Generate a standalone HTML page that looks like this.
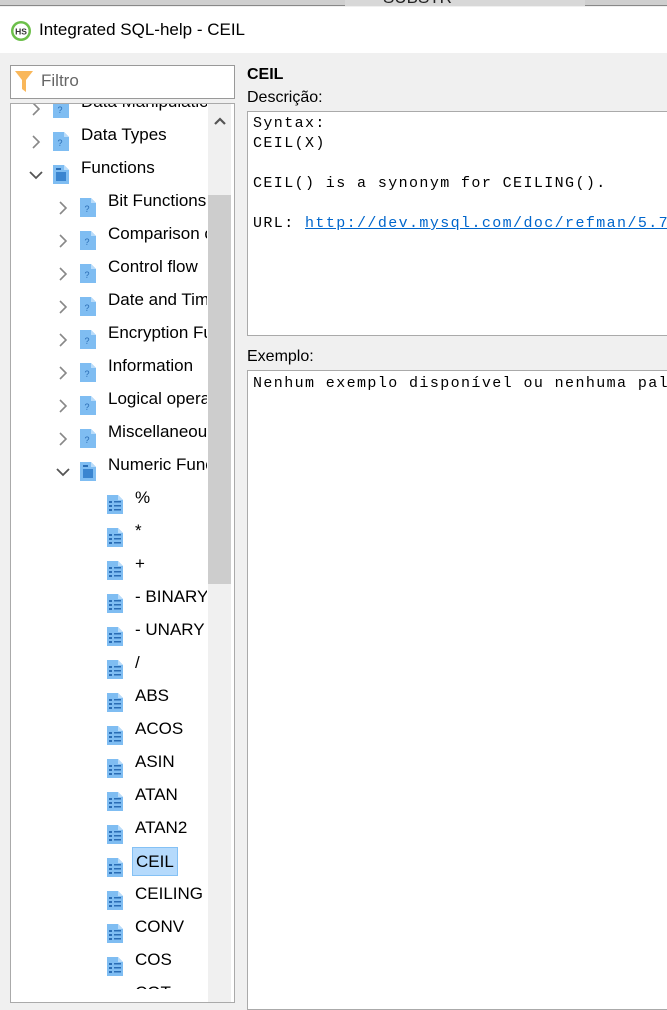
<!DOCTYPE html>
<html><head><meta charset="utf-8"><style>
*{margin:0;padding:0;box-sizing:border-box}
body{width:667px;height:989px;overflow:hidden;background:#f0f0f0;font-family:"Liberation Sans",sans-serif;position:relative}
.abs{position:absolute}
.row{position:absolute;height:33px;font-size:17px;color:#000;line-height:33px;white-space:nowrap;overflow:hidden}
.row svg{position:absolute;top:6px}
.mono{font-family:"Liberation Mono",monospace;font-size:15px;letter-spacing:1.4px;line-height:20px;color:#000;white-space:pre}
</style></head><body>
<div class="abs" style="left:0;top:0;width:667px;height:6px;background:#cfcfcf;border-bottom:1px solid #888"></div>
<div class="abs" style="left:345px;top:-12px;width:240px;height:18px;background:#d8d8d8;font-size:17px;color:#222;padding-left:38px;overflow:hidden">SUBSTR</div>
<div class="abs" style="left:0;top:7px;width:667px;height:46px;background:#fff"></div>
<svg class="abs" style="left:10px;top:20px" width="22" height="22" viewBox="0 0 22 22"><circle cx="11" cy="11" r="10" fill="#6cbf4a"/><circle cx="11" cy="11" r="7.5" fill="#fff"/><text x="11" y="14.5" font-size="8.5" font-weight="bold" text-anchor="middle" fill="#333" font-family="Liberation Sans">HS</text></svg>
<div class="abs" style="left:39px;top:20px;font-size:17px;color:#000">Integrated SQL-help - CEIL</div>

<div class="abs" style="left:10px;top:65px;width:225px;height:34px;background:#fff;border:1px solid #999"></div>
<svg class="abs" style="left:14px;top:70px" width="20" height="24" viewBox="0 0 20 24"><path d="M1 1H19L12 10V22L8 19V10Z" fill="#f9b75a"/></svg>
<div class="abs" style="left:41px;top:71px;font-size:17px;color:#666">Filtro</div>

<div class="abs" style="left:10px;top:103px;width:225px;height:900px;background:#fff;border:1px solid #aaa;overflow:hidden">
<div class="abs" style="left:197px;top:0;width:23px;height:900px;background:#f0f0f0"></div>
<div class="abs" style="left:197px;top:91px;width:23px;height:389px;background:#cdcdcd"></div>
<svg class="abs" style="left:202px;top:12px" width="14" height="10" viewBox="0 0 14 10"><path d="M2 8L7 3L12 8" stroke="#555" stroke-width="2.2" fill="none"/></svg>
</div>
<div class="abs" style="left:11px;top:104px;width:196px;height:885px;overflow:hidden" id="tree">
</div>

<div class="abs" style="left:247px;top:66px;font-size:16px;font-weight:bold">CEIL</div>
<div class="abs" style="left:247px;top:89px;font-size:16px">Descrição:</div>
<div class="abs" style="left:247px;top:111px;width:430px;height:225px;background:#fff;border:1px solid #aaa"></div>
<div class="abs mono" style="left:253px;top:114px">Syntax:
CEIL(X)

CEIL() is a synonym for CEILING().

URL: <span style="color:#0066cc;text-decoration:underline">http://dev.mysql.com/doc/refman/5.7</span></div>
<div class="abs" style="left:247px;top:348px;font-size:16px">Exemplo:</div>
<div class="abs" style="left:247px;top:370px;width:430px;height:640px;background:#fff;border:1px solid #aaa"></div>
<div class="abs mono" style="left:253px;top:374px">Nenhum exemplo disponível ou nenhuma pal</div>

<script>
var q='<svg width="18" height="21" viewBox="0 0 18 21"><path d="M1 1H12L17 6V20H1Z" fill="#7fbdf2"/><path d="M12 1V6H17" fill="#b9dcfa"/><text x="8" y="15" font-size="9" fill="#2a6db5" text-anchor="middle" font-family="Liberation Sans">?</text></svg>';
var d='<svg width="18" height="21" viewBox="0 0 18 21"><path d="M1 1H12L17 6V20H1Z" fill="#7fbdf2"/><path d="M12 1V6H17" fill="#b9dcfa"/><rect x="4" y="4" width="5" height="2" fill="#2a6db5"/><rect x="4" y="8" width="10" height="9" fill="#3a85d0"/></svg>';
var l='<svg width="18" height="21" viewBox="0 0 18 21"><path d="M1 1H12L17 6V20H1Z" fill="#7fbdf2"/><path d="M12 1V6H17" fill="#b9dcfa"/><g fill="#2a6db5"><rect x="3" y="7" width="3" height="2"/><rect x="3" y="11" width="3" height="2"/><rect x="3" y="15" width="3" height="2"/><rect x="8" y="7" width="7" height="1.5"/><rect x="8" y="11" width="7" height="1.5"/><rect x="8" y="15" width="7" height="1.5"/></g></svg>';
var rc='<svg width="10" height="14" viewBox="0 0 10 14"><path d="M2 1L8 7L2 13" stroke="#888" stroke-width="1.6" fill="none"/></svg>';
var dc='<svg width="14" height="10" viewBox="0 0 14 10"><path d="M1 2L7 8L13 2" stroke="#555" stroke-width="1.8" fill="none"/></svg>';
var rows=[[1,'r',q,'Data Manipulation'],[1,'r',q,'Data Types'],[1,'d',d,'Functions'],
[2,'r',q,'Bit Functions'],[2,'r',q,'Comparison operators'],[2,'r',q,'Control flow'],[2,'r',q,'Date and Time'],[2,'r',q,'Encryption Functions'],[2,'r',q,'Information'],[2,'r',q,'Logical operators'],[2,'r',q,'Miscellaneous'],[2,'d',d,'Numeric Functions'],
[3,'',l,'%'],[3,'',l,'*'],[3,'',l,'+'],[3,'',l,'- BINARY'],[3,'',l,'- UNARY'],[3,'',l,'/'],[3,'',l,'ABS'],[3,'',l,'ACOS'],[3,'',l,'ASIN'],[3,'',l,'ATAN'],[3,'',l,'ATAN2'],[3,'',l,'CEIL'],[3,'',l,'CEILING'],[3,'',l,'CONV'],[3,'',l,'COS'],[3,'',l,'COT']];
var h='';
rows.forEach(function(r,i){
 var ctr=135+(i-1)*33; var t=ctr-16-104;
 var ix=[0,52,79,106][r[0]]-11, tx=[0,82,109,136][r[0]]-11, cx=[0,29,56,0][r[0]]-11;
 var ch='';
 if(r[1]=='r') ch='<div style="position:absolute;left:'+(cx+2)+'px;top:10px">'+rc+'</div>';
 if(r[1]=='d') ch='<div style="position:absolute;left:'+cx+'px;top:12px">'+dc+'</div>';
 var lab=r[3];
 var sel=lab=='CEIL'?'background:#b5dafc;border:1px solid #84c1f5;':'';
 h+='<div class="row" style="left:0;top:'+t+'px;width:196px">'+ch+'<div style="position:absolute;left:'+ix+'px;top:6px">'+r[2]+'</div><div style="position:absolute;left:'+(tx-4)+'px;top:2px;height:29px;line-height:27px;padding:0 3px;'+sel+'">'+lab+'</div></div>';
});
document.getElementById('tree').innerHTML=h;
</script>
</body></html>
